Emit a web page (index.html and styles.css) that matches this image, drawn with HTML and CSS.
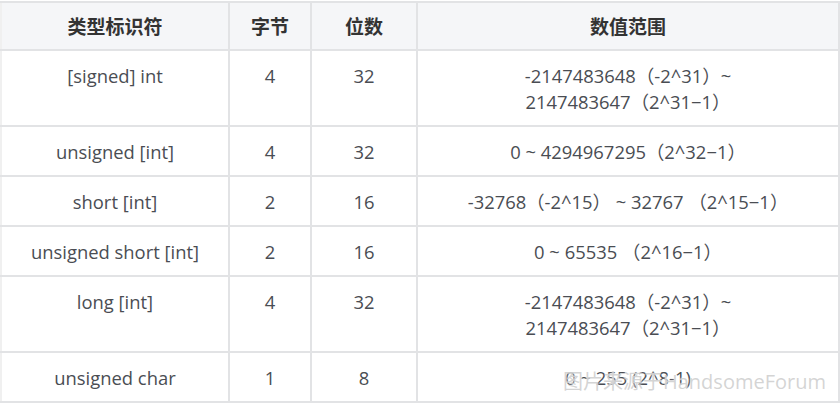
FILE: index.html
```html
<!DOCTYPE html>
<html lang="zh">
<head>
<meta charset="utf-8">
<link rel="stylesheet" href="styles.css">
</head>
<body>
<div class="wrap">
<table class="types">
  <colgroup>
    <col class="c1"><col class="c2"><col class="c3"><col class="c4">
  </colgroup>
  <thead>
    <tr><th>类型标识符</th><th>字节</th><th>位数</th><th>数值范围</th></tr>
  </thead>
  <tbody>
    <tr><td>[signed] int</td><td>4</td><td>32</td><td>-2147483648（-2^31）~<br>2147483647（2^31−1）</td></tr>
    <tr><td>unsigned [int]</td><td>4</td><td>32</td><td>0 ~ 4294967295（2^32−1）</td></tr>
    <tr><td>short [int]</td><td>2</td><td>16</td><td>-32768（-2^15） ~ 32767 （2^15−1）</td></tr>
    <tr><td>unsigned short [int]</td><td>2</td><td>16</td><td>0 ~ 65535 （2^16−1）</td></tr>
    <tr><td>long [int]</td><td>4</td><td>32</td><td>-2147483648（-2^31）~<br>2147483647（2^31−1）</td></tr>
    <tr><td>unsigned char</td><td>1</td><td>8</td><td>0 ~ 255 (2^8-1)</td></tr>
  </tbody>
</table>
<div class="watermark">图片来源于HandsomeForum</div>
</div>
</body>
</html>
```
FILE: styles.css
```css
html, body {
  margin: 0;
  padding: 0;
  background: #ffffff;
}
body {
  font-family: "Open Sans", "Noto Sans CJK SC", sans-serif;
  color: #4a4d53;
}
.wrap {
  position: relative;
  width: 840px;
  height: 406px;
  overflow: hidden;
  padding-top: 1px;
  box-sizing: border-box;
}
.types {
  border-collapse: collapse;
  width: 838px;
  table-layout: fixed;
  font-size: 18.4px;
}
.c1 { width: 228px; }
.c2 { width: 82px; }
.c3 { width: 106px; }
.c4 { width: 422px; }
.types th, .types td {
  border: 2px solid #e2e3e5;
  text-align: center;
  vertical-align: top;
  line-height: 26px;
}
.types th {
  background: #f5f6f8;
  font-family: "Noto Sans CJK SC", sans-serif;
  font-size: 19px;
  font-weight: 700;
  color: #333333;
  padding: 10px 4px 10px;
  height: 26px;
}
.types td {
  padding: 12px 4px 10px;
}
.types tr > :first-child { border-left-color: #f0f0f0; }
.watermark {
  position: absolute;
  left: 563px;
  top: 366px;
  white-space: nowrap;
  font-family: "Open Sans", "Noto Sans CJK SC", sans-serif;
  font-size: 20px;
  color: rgba(205, 205, 205, 0.85);
  text-shadow: 0 0 2px rgba(255, 255, 255, 0.9);
}
```
